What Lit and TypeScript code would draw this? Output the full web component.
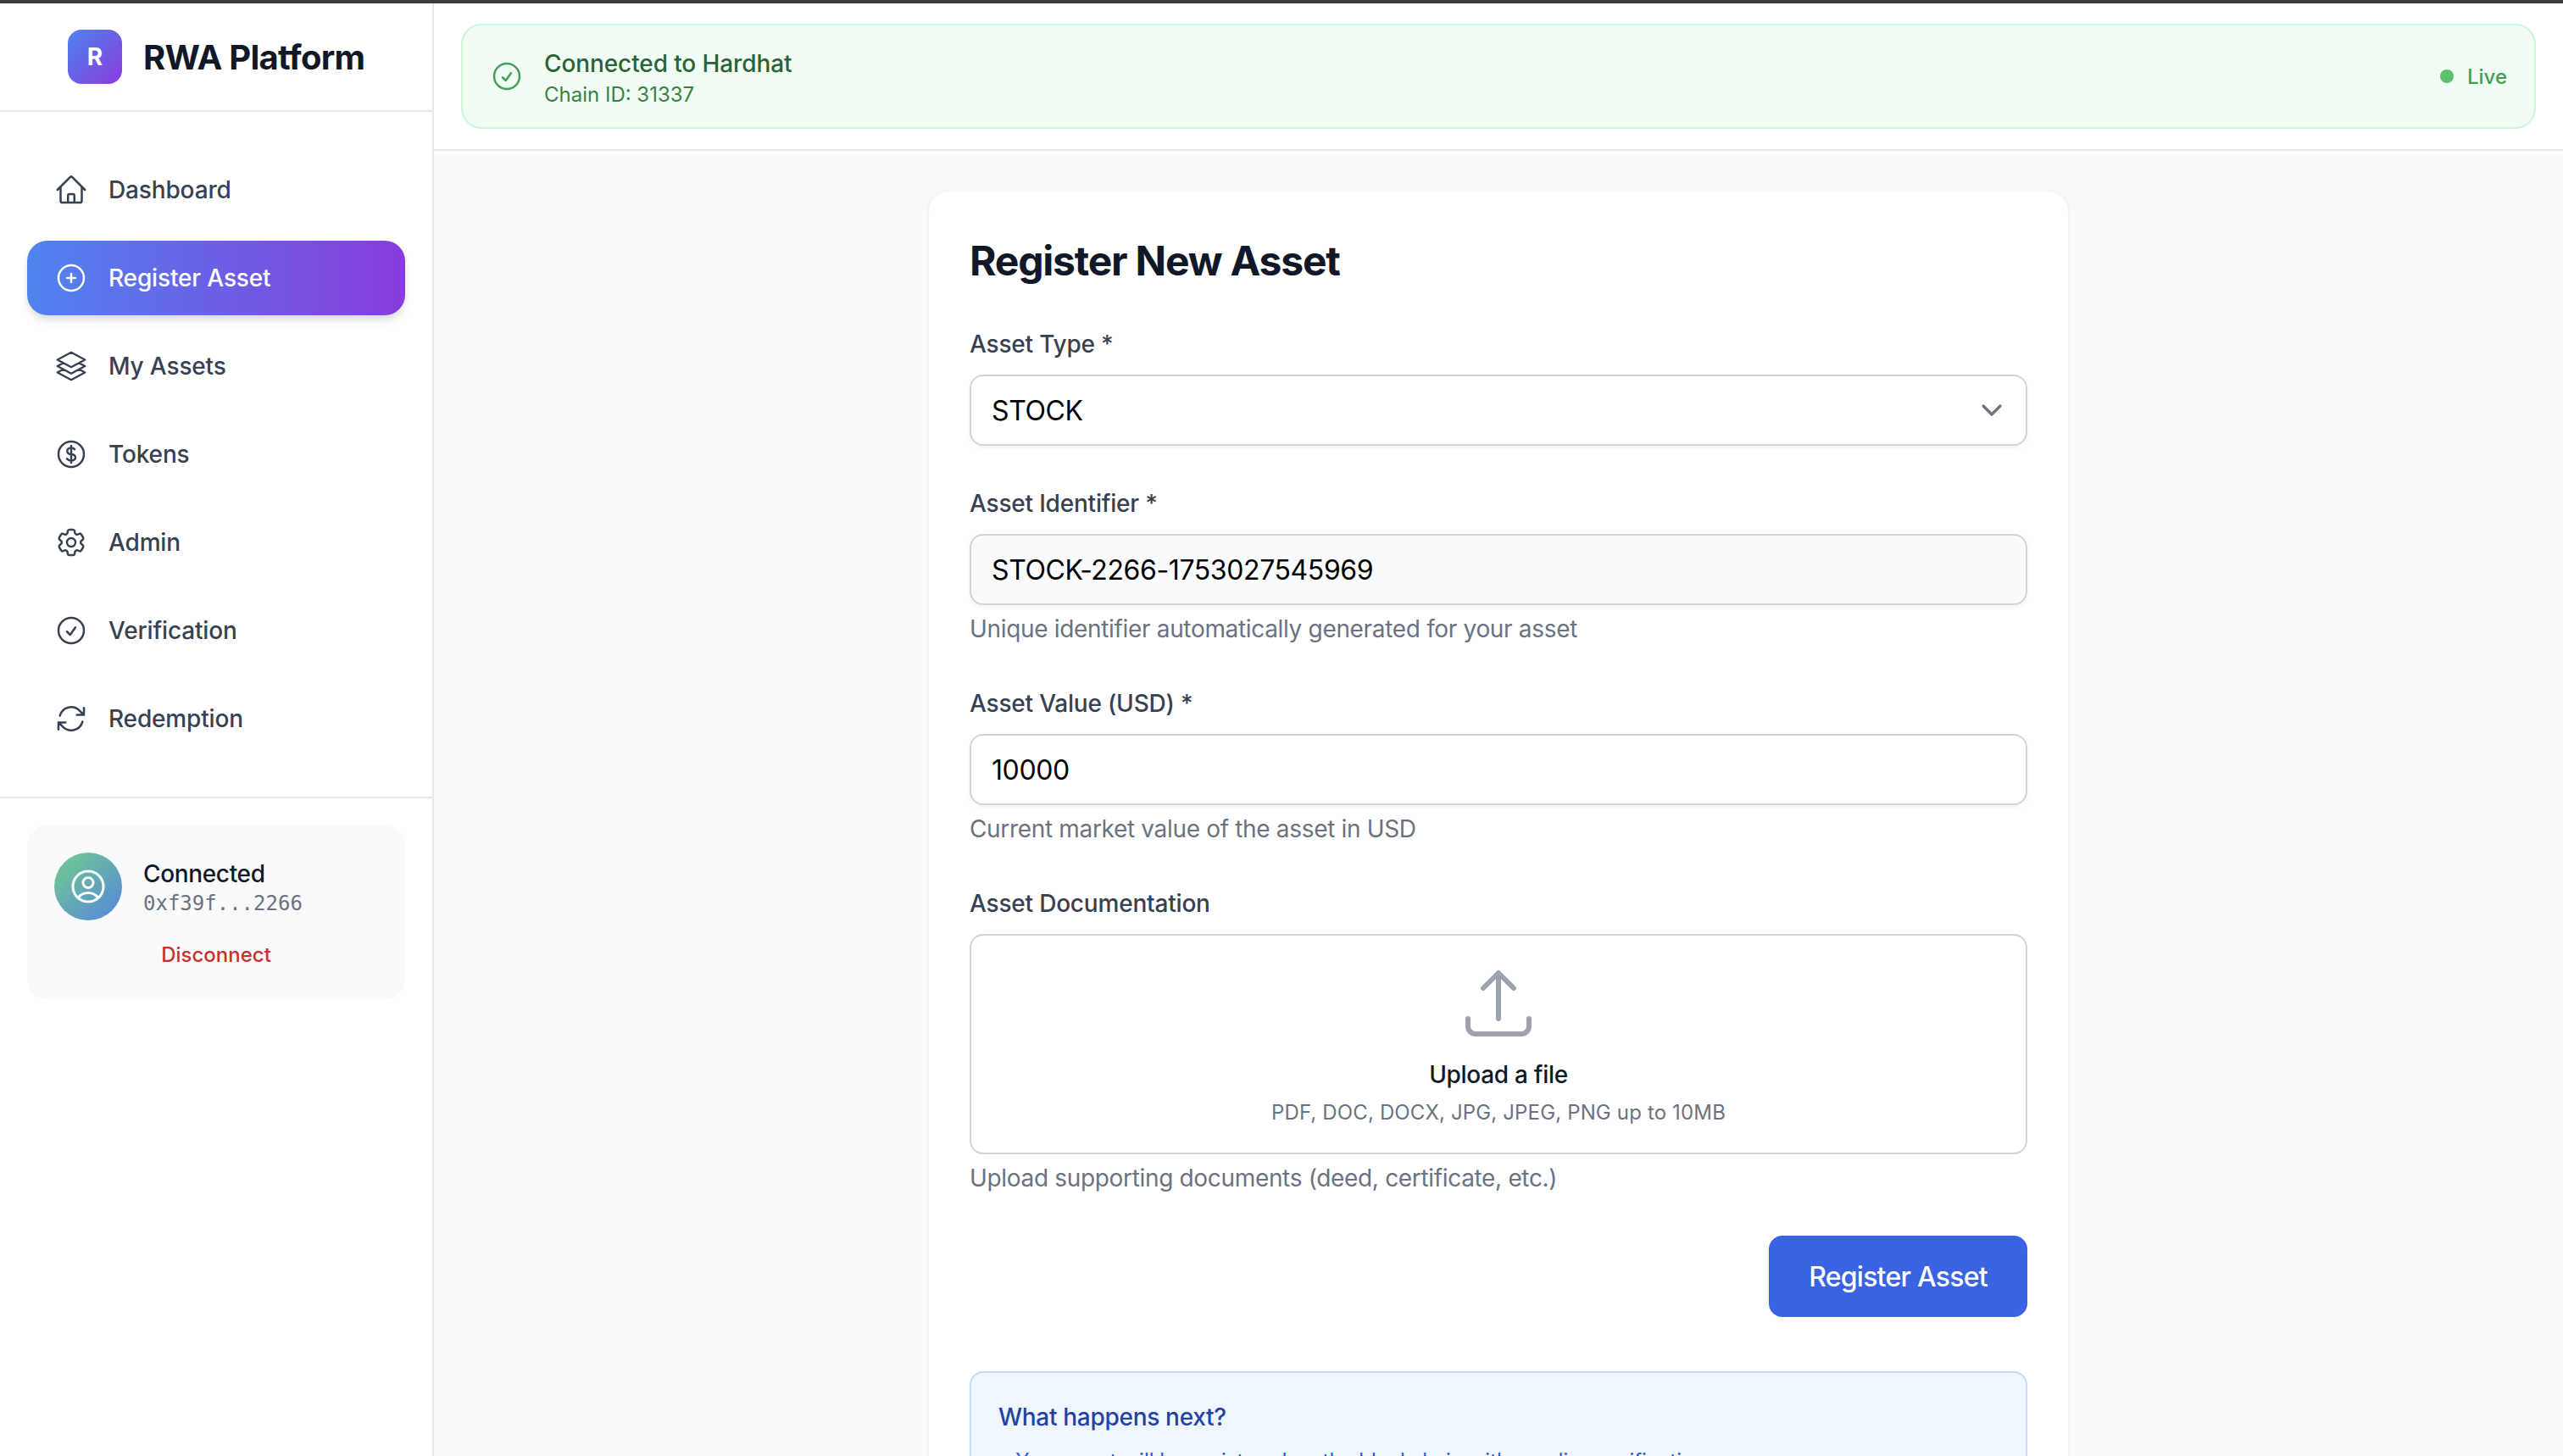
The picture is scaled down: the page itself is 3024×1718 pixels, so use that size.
import { LitElement, html, css, svg } from 'lit';
import { customElement } from 'lit/decorators.js';

const icons = {
  home: svg`<path d="M2.25 12l8.954-8.955c.44-.439 1.152-.439 1.591 0L21.75 12M4.5 9.75v10.125c0 .621.504 1.125 1.125 1.125H9.75v-4.875c0-.621.504-1.125 1.125-1.125h2.25c.621 0 1.125.504 1.125 1.125V21h4.125c.621 0 1.125-.504 1.125-1.125V9.75M8.25 21h8.25"/>`,
  plus: svg`<path d="M12 9v6m3-3H9m12 0a9 9 0 1 1-18 0 9 9 0 0 1 18 0z"/>`,
  stack: svg`<path d="M6.429 9.75L2.25 12l4.179 2.25m0-4.5l5.571 3 5.571-3m-11.142 0L2.25 7.5 12 2.25l9.75 5.25-4.179 2.25m0 0L21.75 12l-4.179 2.25m0 0l4.179 2.25L12 21.75 2.25 16.5l4.179-2.25m11.142 0l-5.571 3-5.571-3"/>`,
  dollar: svg`<path d="M12 6v12m-3-2.818l.879.659c1.171.879 3.07.879 4.242 0 1.172-.879 1.172-2.303 0-3.182C13.536 12.219 12.768 12 12 12c-.725 0-1.45-.22-2.003-.659-1.106-.879-1.106-2.303 0-3.182s2.9-.879 4.006 0l.415.33M21 12a9 9 0 1 1-18 0 9 9 0 0 1 18 0z"/>`,
  gear: svg`<path d="M9.594 3.94c.09-.542.56-.94 1.11-.94h2.593c.55 0 1.02.398 1.11.94l.213 1.281c.063.374.313.686.645.87.074.04.147.083.22.127.324.196.72.257 1.075.124l1.217-.456a1.125 1.125 0 0 1 1.37.49l1.296 2.247a1.125 1.125 0 0 1-.26 1.431l-1.003.827c-.293.24-.438.613-.431.992a6.759 6.759 0 0 1 0 .255c-.007.378.138.75.43.99l1.005.828c.424.35.534.954.26 1.43l-1.298 2.247a1.125 1.125 0 0 1-1.369.491l-1.217-.456c-.355-.133-.75-.072-1.076.124a6.57 6.57 0 0 1-.22.128c-.331.183-.581.495-.644.869l-.213 1.28c-.09.543-.56.941-1.11.941h-2.594c-.55 0-1.02-.398-1.11-.94l-.213-1.281c-.062-.374-.312-.686-.644-.87a6.52 6.52 0 0 1-.22-.127c-.325-.196-.72-.257-1.076-.124l-1.217.456a1.125 1.125 0 0 1-1.369-.49l-1.297-2.247a1.125 1.125 0 0 1 .26-1.431l1.004-.827c.292-.24.437-.613.43-.992a6.932 6.932 0 0 1 0-.255c.007-.378-.138-.75-.43-.99l-1.004-.828a1.125 1.125 0 0 1-.26-1.43l1.297-2.247a1.125 1.125 0 0 1 1.37-.491l1.216.456c.356.133.751.072 1.076-.124.072-.044.146-.087.22-.128.332-.183.582-.495.644-.869l.214-1.281z"/><path d="M15 12a3 3 0 1 1-6 0 3 3 0 0 1 6 0z"/>`,
  check: svg`<path d="M9 12.75L11.25 15 15 9.75M21 12a9 9 0 1 1-18 0 9 9 0 0 1 18 0z"/>`,
  refresh: svg`<path d="M16.023 9.348h4.992v-.001M2.985 19.644v-4.992m0 0h4.992m-4.993 0l3.181 3.183a8.25 8.25 0 0 0 13.803-3.7M4.031 9.865a8.25 8.25 0 0 1 13.803-3.7l3.181 3.182m0-4.991v4.99"/>`,
  user: svg`<path d="M17.982 18.725A7.488 7.488 0 0 0 12 15.75a7.488 7.488 0 0 0-5.982 2.975m11.963 0a9 9 0 1 0-11.963 0m11.963 0A8.966 8.966 0 0 1 12 21a8.966 8.966 0 0 1-5.982-2.275M15 9.75a3 3 0 1 1-6 0 3 3 0 0 1 6 0z"/>`,
  upload: svg`<path d="M3 16.5v2.25A2.25 2.25 0 0 0 5.25 21h13.5A2.25 2.25 0 0 0 21 18.75V16.5m-13.5-9L12 3m0 0l4.5 4.5M12 3v13.5"/>`,
  chevron: svg`<path d="M19.5 8.25l-7.5 7.5-7.5-7.5"/>`,
};

type IconName = keyof typeof icons;

const navItems: { label: string; icon: IconName; active?: boolean }[] = [
  { label: 'Dashboard', icon: 'home' },
  { label: 'Register Asset', icon: 'plus', active: true },
  { label: 'My Assets', icon: 'stack' },
  { label: 'Tokens', icon: 'dollar' },
  { label: 'Admin', icon: 'gear' },
  { label: 'Verification', icon: 'check' },
  { label: 'Redemption', icon: 'refresh' },
];

const icon = (name: IconName, cls = '') =>
  html`<svg class="icon ${cls}" viewBox="0 0 24 24" fill="none" stroke="currentColor" stroke-width="1.5" stroke-linecap="round" stroke-linejoin="round">${icons[name]}</svg>`;

@customElement('app-root')
export class AppRoot extends LitElement {
  static styles = css`
    :host {
      display: flex;
      flex-direction: column;
      width: 3024px;
      height: 1718px;
      overflow: hidden;
      background: #f9fafb;
      font-family: Inter, 'Liberation Sans', sans-serif;
      color: #111827;
    }
    .topline {
      height: 4px;
      flex: none;
      background: #3c3c3c;
    }
    .shell {
      flex: 1;
      display: flex;
      min-height: 0;
    }
    .icon {
      display: block;
      flex: none;
    }

    .sidebar {
      width: 512px;
      flex: none;
      box-sizing: border-box;
      background: #fff;
      border-right: 2px solid #e5e7eb;
      display: flex;
      flex-direction: column;
    }
    .brand {
      height: 128px;
      box-sizing: border-box;
      border-bottom: 2px solid #e5e7eb;
      padding-left: 80px;
      display: flex;
      align-items: center;
      gap: 25px;
    }
    .logo {
      width: 64px;
      height: 64px;
      border-radius: 16px;
      background: linear-gradient(135deg, #4f84ef, #883bdc);
      color: #fff;
      font-size: 28px;
      font-weight: 700;
      display: flex;
      align-items: center;
      justify-content: center;
    }
    .brand-name {
      font-size: 40px;
      font-weight: 700;
      letter-spacing: -0.75px;
    }
    nav {
      padding: 48px 32px 48px;
      display: flex;
      flex-direction: column;
      gap: 16px;
      border-bottom: 2px solid #e5e7eb;
    }
    .nav-item {
      height: 88px;
      padding-left: 32px;
      border-radius: 24px;
      display: flex;
      align-items: center;
      gap: 24px;
      font-size: 28px;
      font-weight: 500;
      letter-spacing: -0.15px;
      color: #374151;
    }
    .nav-item .icon {
      width: 40px;
      height: 40px;
    }
    .nav-item.active {
      color: #fff;
      background: linear-gradient(90deg, #4f84ef, #883bdc);
      box-shadow: 0 8px 12px -2px rgba(0, 0, 0, 0.1), 0 4px 8px -2px rgba(0, 0, 0, 0.08);
    }
    .wallet-wrap {
      padding: 32px;
    }
    .wallet {
      background: #f9fafb;
      border-radius: 24px;
      padding: 32px;
      height: 205px;
      box-sizing: border-box;
    }
    .wallet-top {
      display: flex;
      align-items: center;
      gap: 25px;
    }
    .wallet-text {
      padding-top: 2px;
    }
    .avatar {
      width: 80px;
      height: 80px;
      border-radius: 50%;
      background: linear-gradient(135deg, #72d08c, #5583de);
      color: #fff;
      display: flex;
      align-items: center;
      justify-content: center;
    }
    .avatar .icon {
      width: 48px;
      height: 48px;
    }
    .wallet-name {
      font-size: 28px;
      font-weight: 500;
      line-height: 36px;
      letter-spacing: -0.35px;
    }
    .wallet-addr {
      margin-top: 1px;
      font-family: 'DejaVu Sans Mono', 'Liberation Mono', monospace;
      font-size: 24px;
      line-height: 32px;
      color: #6b7280;
    }
    .disconnect {
      margin-top: 25px;
      text-align: center;
      font-size: 24px;
      line-height: 32px;
      font-weight: 500;
      color: #c8302b;
    }

    .main {
      flex: 1;
      min-width: 0;
      display: flex;
      flex-direction: column;
    }
    .status-bar {
      flex: none;
      height: 174px;
      box-sizing: border-box;
      background: #fff;
      border-bottom: 2px solid #e5e7eb;
      padding: 24px 32px;
    }
    .banner {
      height: 100%;
      box-sizing: border-box;
      background: #f1fcf5;
      border: 2px solid #cdf6d8;
      border-radius: 24px;
      padding: 0 32px;
      display: flex;
      align-items: center;
      gap: 24px;
    }
    .banner .icon {
      width: 40px;
      height: 40px;
      color: #45a055;
    }
    .banner-text {
      flex: 1;
      padding-top: 2px;
    }
    .banner-title {
      font-size: 28px;
      font-weight: 500;
      line-height: 40px;
      letter-spacing: -0.1px;
      color: #2a6335;
    }
    .banner-sub {
      margin-top: 1px;
      font-size: 24px;
      line-height: 32px;
      color: #3a8045;
    }
    .live {
      display: flex;
      align-items: center;
      gap: 16px;
      font-size: 24px;
      font-weight: 500;
      color: #40a050;
    }
    .dot {
      width: 16px;
      height: 16px;
      border-radius: 50%;
      background: #5cc06c;
    }

    .content {
      flex: 1;
      min-height: 0;
      overflow: hidden;
      padding-top: 48px;
      display: flex;
      justify-content: center;
    }
    .card {
      width: 1344px;
      height: max-content;
      box-sizing: border-box;
      background: #fff;
      border-radius: 24px;
      box-shadow: 0 2px 6px rgba(0, 0, 0, 0.08);
      padding: 50px 48px 48px;
    }
    h1 {
      margin: 0 0 46px;
      font-size: 48px;
      line-height: 64px;
      font-weight: 700;
      letter-spacing: -1.2px;
    }
    .field {
      margin-bottom: 48px;
    }
    label {
      display: block;
      margin-bottom: 16px;
      font-size: 28px;
      line-height: 40px;
      font-weight: 500;
      letter-spacing: -0.2px;
      color: #374151;
    }
    .control {
      height: 84px;
      box-sizing: border-box;
      border: 2px solid #d1d5db;
      border-radius: 16px;
      padding: 0 24px;
      display: flex;
      align-items: center;
      justify-content: space-between;
      font-size: 32px;
      letter-spacing: -0.4px;
      color: #000;
      background: #fff;
      box-shadow: 0 2px 4px rgba(0, 0, 0, 0.05);
    }
    .control.readonly {
      background: #f9fafb;
    }
    .control .icon {
      width: 32px;
      height: 32px;
      color: #6b7280;
      stroke-width: 2.4;
    }
    .hint {
      margin-top: 8px;
      font-size: 28px;
      line-height: 40px;
      letter-spacing: -0.33px;
      color: #6b7280;
    }
    .drop {
      height: 260px;
      box-sizing: border-box;
      border: 2px solid #d1d5db;
      border-radius: 16px;
      display: flex;
      flex-direction: column;
      align-items: center;
      padding-top: 32px;
    }
    .drop .icon {
      width: 96px;
      height: 96px;
      color: #9ca3af;
    }
    .drop-title {
      margin-top: 16px;
      font-size: 28px;
      line-height: 40px;
      font-weight: 500;
      letter-spacing: -0.3px;
    }
    .drop-sub {
      margin-top: 9px;
      font-size: 24px;
      line-height: 32px;
      letter-spacing: 0.15px;
      color: #6b7280;
    }
    .actions {
      display: flex;
      justify-content: flex-end;
    }
    .submit {
      width: 305px;
      height: 96px;
      border: none;
      border-radius: 16px;
      background: #3a63e4;
      color: #fff;
      font: 500 32px Inter, 'Liberation Sans', sans-serif;
      letter-spacing: -0.75px;
    }
    .next {
      margin-top: 64px;
      background: #eff6ff;
      border: 2px solid #c3daf9;
      border-radius: 16px;
      padding: 32px;
    }
    .next-title {
      font-size: 28px;
      line-height: 40px;
      font-weight: 500;
      letter-spacing: -0.3px;
      color: #2342a3;
    }
    .next ul {
      margin: 16px 0 0;
      padding: 0;
      list-style: none;
      font-size: 24px;
      line-height: 32px;
      color: #2f5bd0;
    }
  `;

  render() {
    return html`
      <div class="topline"></div>
      <div class="shell">
        <aside class="sidebar">
          <div class="brand">
            <div class="logo">R</div>
            <div class="brand-name">RWA Platform</div>
          </div>
          <nav>
            ${navItems.map(
              (n) => html`<div class="nav-item ${n.active ? 'active' : ''}">${icon(n.icon)}<span>${n.label}</span></div>`,
            )}
          </nav>
          <div class="wallet-wrap">
            <div class="wallet">
              <div class="wallet-top">
                <div class="avatar">${icon('user')}</div>
                <div class="wallet-text">
                  <div class="wallet-name">Connected</div>
                  <div class="wallet-addr">0xf39f...2266</div>
                </div>
              </div>
              <div class="disconnect">Disconnect</div>
            </div>
          </div>
        </aside>
        <div class="main">
          <div class="status-bar">
            <div class="banner">
              ${icon('check')}
              <div class="banner-text">
                <div class="banner-title">Connected to Hardhat</div>
                <div class="banner-sub">Chain ID: 31337</div>
              </div>
              <div class="live"><span class="dot"></span>Live</div>
            </div>
          </div>
          <div class="content">
            <div class="card">
              <h1>Register New Asset</h1>
              <div class="field">
                <label>Asset Type *</label>
                <div class="control"><span>STOCK</span>${icon('chevron')}</div>
              </div>
              <div class="field">
                <label>Asset Identifier *</label>
                <div class="control readonly">STOCK-2266-1753027545969</div>
                <div class="hint">Unique identifier automatically generated for your asset</div>
              </div>
              <div class="field">
                <label>Asset Value (USD) *</label>
                <div class="control">10000</div>
                <div class="hint">Current market value of the asset in USD</div>
              </div>
              <div class="field">
                <label>Asset Documentation</label>
                <div class="drop">
                  ${icon('upload')}
                  <div class="drop-title">Upload a file</div>
                  <div class="drop-sub">PDF, DOC, DOCX, JPG, JPEG, PNG up to 10MB</div>
                </div>
                <div class="hint">Upload supporting documents (deed, certificate, etc.)</div>
              </div>
              <div class="actions"><button class="submit">Register Asset</button></div>
              <div class="next">
                <div class="next-title">What happens next?</div>
                <ul><li>• Your asset will be registered on the blockchain with pending verification</li></ul>
              </div>
            </div>
          </div>
        </div>
      </div>
    `;
  }
}

declare global {
  interface HTMLElementTagNameMap {
    'app-root': AppRoot;
  }
}
